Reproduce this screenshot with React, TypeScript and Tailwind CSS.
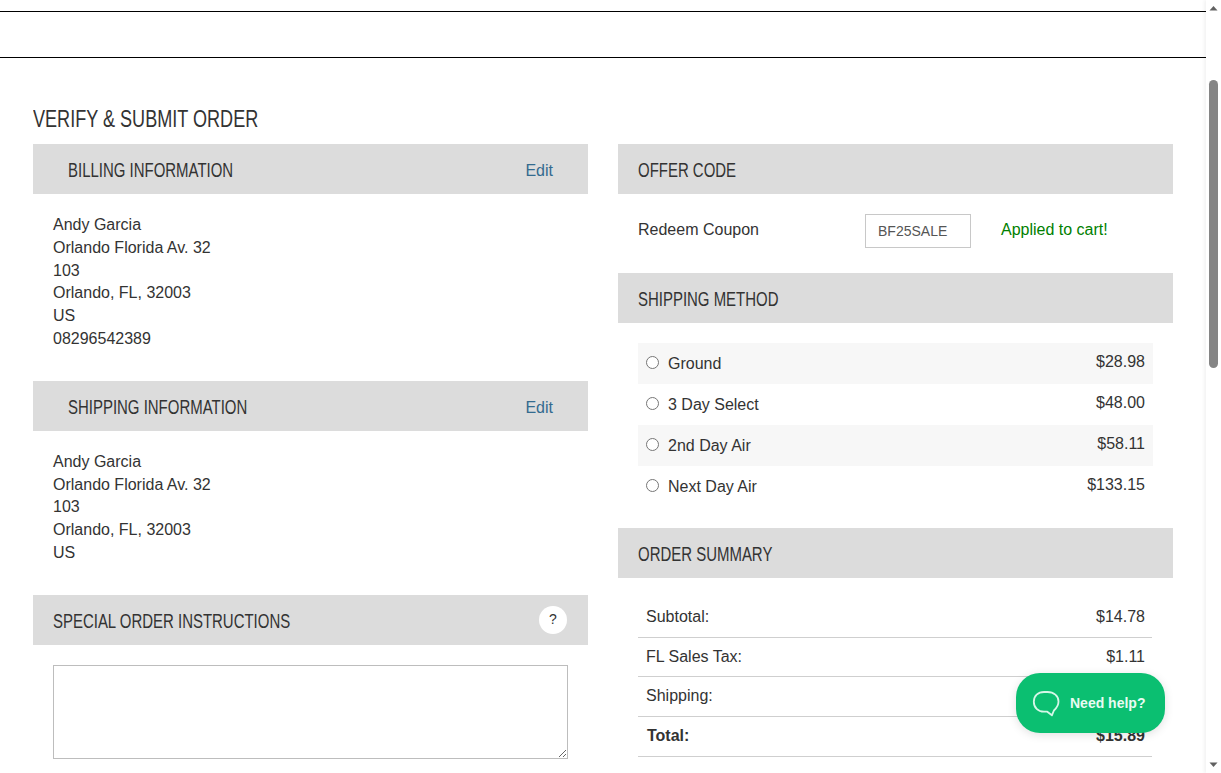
import React from "react";

const sans = "font-['Liberation_Sans',Arial,sans-serif]";
const head = "inline-block origin-left scale-x-[0.748] translate-y-px whitespace-nowrap text-[20px] text-[#333] leading-[50px]";

function Bar({ title, pad = "pl-5", right }: { title: string; pad?: string; right?: React.ReactNode }) {
  return (
    <div className={`h-[50px] bg-[#dcdcdc] flex items-center justify-between pr-[35px] ${pad}`}>
      <h2 className={head}>{title}</h2>
      {right}
    </div>
  );
}

function Address({ lines }: { lines: string[] }) {
  return (
    <div className="pl-5 pt-[20px] pb-[30px] text-[16px] leading-[22.8px] text-[#333]">
      {lines.map((l, i) => (
        <div key={i}>{l}</div>
      ))}
    </div>
  );
}

const methods = [
  ["Ground", "$28.98"],
  ["3 Day Select", "$48.00"],
  ["2nd Day Air", "$58.11"],
  ["Next Day Air", "$133.15"],
];

const summary = [
  ["Subtotal:", "$14.78", false],
  ["FL Sales Tax:", "$1.11", false],
  ["Shipping:", "$0.00", false],
  ["Total:", "$15.89", true],
] as const;

const edit = <a className="text-[16px] text-[#336b8f] pt-[4px]">Edit</a>;

export default function App() {
  return (
    <div className={`${sans} relative h-[773px] w-[1221px] overflow-hidden bg-white flex`}>
      <main className="w-[1206px] shrink-0">
        <div className="h-[58px] pt-[11px]">
          <div className="h-[47px] border-y border-black" />
        </div>
        <div className="pl-[33px] pr-[33px] pt-[47px]">
          <h1 className="origin-left scale-x-[0.753] whitespace-nowrap text-[24px] leading-[28px] text-[#333] mb-[11px]">
            VERIFY &amp; SUBMIT ORDER
          </h1>
          <div className="flex gap-[30px]">
            <section className="w-[555px]">
              <Bar title="BILLING INFORMATION" pad="pl-[35px]" right={edit} />
              <Address lines={["Andy Garcia", "Orlando Florida Av. 32", "103", "Orlando, FL, 32003", "US", "08296542389"]} />
              <Bar title="SHIPPING INFORMATION" pad="pl-[35px]" right={edit} />
              <Address lines={["Andy Garcia", "Orlando Florida Av. 32", "103", "Orlando, FL, 32003", "US"]} />
              <div className="h-[50px] bg-[#dcdcdc] flex items-center justify-between pl-5 pr-[21px]">
                <h2 className={head}>SPECIAL ORDER INSTRUCTIONS</h2>
                <span className="w-[28px] h-[28px] rounded-full bg-white flex items-center justify-center text-[14px] text-[#333]">?</span>
              </div>
              <div className="px-5 pt-5">
                <textarea className="block w-[515px] h-[94px] border border-[#bdbdbd] bg-white outline-none" />
              </div>
            </section>

            <section className="w-[555px]">
              <Bar title="OFFER CODE" />
              <div className="h-[79px] pl-5 pt-[21px] flex items-start text-[16px] text-[#333]">
                <span className="w-[227px] leading-[30px]">Redeem Coupon</span>
                <input
                  readOnly
                  value="BF25SALE"
                  className="w-[106px] h-[34px] -mt-px border border-[#c8c8c8] px-3 text-[14px] text-[#555] outline-none"
                />
                <span className="ml-[30px] leading-[30px] text-[#008000]">Applied to cart!</span>
              </div>
              <Bar title="SHIPPING METHOD" />
              <div className="px-5 pt-5 pb-[21px]">
                {methods.map(([n, p], i) => (
                  <div
                    key={n}
                    className={`h-[41px] flex items-center justify-between pl-[8px] pr-[8px] text-[16px] text-[#333] ${i % 2 === 0 ? "bg-[#f7f7f7]" : "bg-white"}`}
                  >
                    <span className="flex items-center">
                      <span className="w-[13px] h-[13px] rounded-full border border-[#767676] bg-white mr-[9px] -mt-[3px]" />
                      <span className="pt-[1px]">{n}</span>
                    </span>
                    <span className="-mt-[3px]">{p}</span>
                  </div>
                ))}
              </div>
              <Bar title="ORDER SUMMARY" />
              <div className="pl-5 pr-[21px] pt-5">
                {summary.map(([l, v, bold]) => (
                  <div
                    key={l}
                    className={`h-[39.7px] flex items-center justify-between px-[8px] border-b border-[#cfcfcf] text-[16px] text-[#333] ${bold ? "font-bold text-[#222]" : ""}`}
                  >
                    <span className={l === "Shipping:" ? "-mt-[2px]" : bold ? "ml-px" : ""}>{l}</span>
                    <span className="-mr-px">{v}</span>
                  </div>
                ))}
              </div>
            </section>
          </div>
        </div>
      </main>

      <aside className="w-[15px] shrink-0 h-full bg-white flex flex-col items-center shadow-[-2px_0_3px_rgba(0,0,0,0.05)]">
        <svg width="15" height="17" viewBox="0 0 15 17" className="shrink-0">
          <path d="M3.5 10.5 L7.5 6 L11.5 10.5 Z" fill="#606060" />
        </svg>
        <div className="flex-none mt-[63px] w-[9px] h-[288px] rounded-[5px] bg-[#858585]" />
        <div className="flex-1" />
        <svg width="15" height="17" viewBox="0 0 15 17" className="shrink-0">
          <path d="M3.5 6.5 L7.5 11 L11.5 6.5 Z" fill="#606060" />
        </svg>
      </aside>

      <button className="absolute left-[1016px] top-[673px] w-[149px] h-[60px] rounded-[24px] bg-[#0bbf71] shadow-[0_2px_10px_rgba(0,0,0,0.12)] flex items-center pl-[16px]">
        <svg width="28" height="28" viewBox="0 0 28 28" fill="none" stroke="#d6f7e8" strokeWidth="1.8" className="mr-[10px]" strokeLinejoin="round">
          <path d="M12 3h3.5C21.8 3 26.5 7 26.5 12.5c0 4-2 6.6-4.6 9l-2 4.8-4.6-3.6H12C6 22.7 1.8 18.5 1.8 12.7S6 3 12 3z" />
        </svg>
        <span className="text-[14px] font-bold text-[#e9fbf3]">Need help?</span>
      </button>
    </div>
  );
}
